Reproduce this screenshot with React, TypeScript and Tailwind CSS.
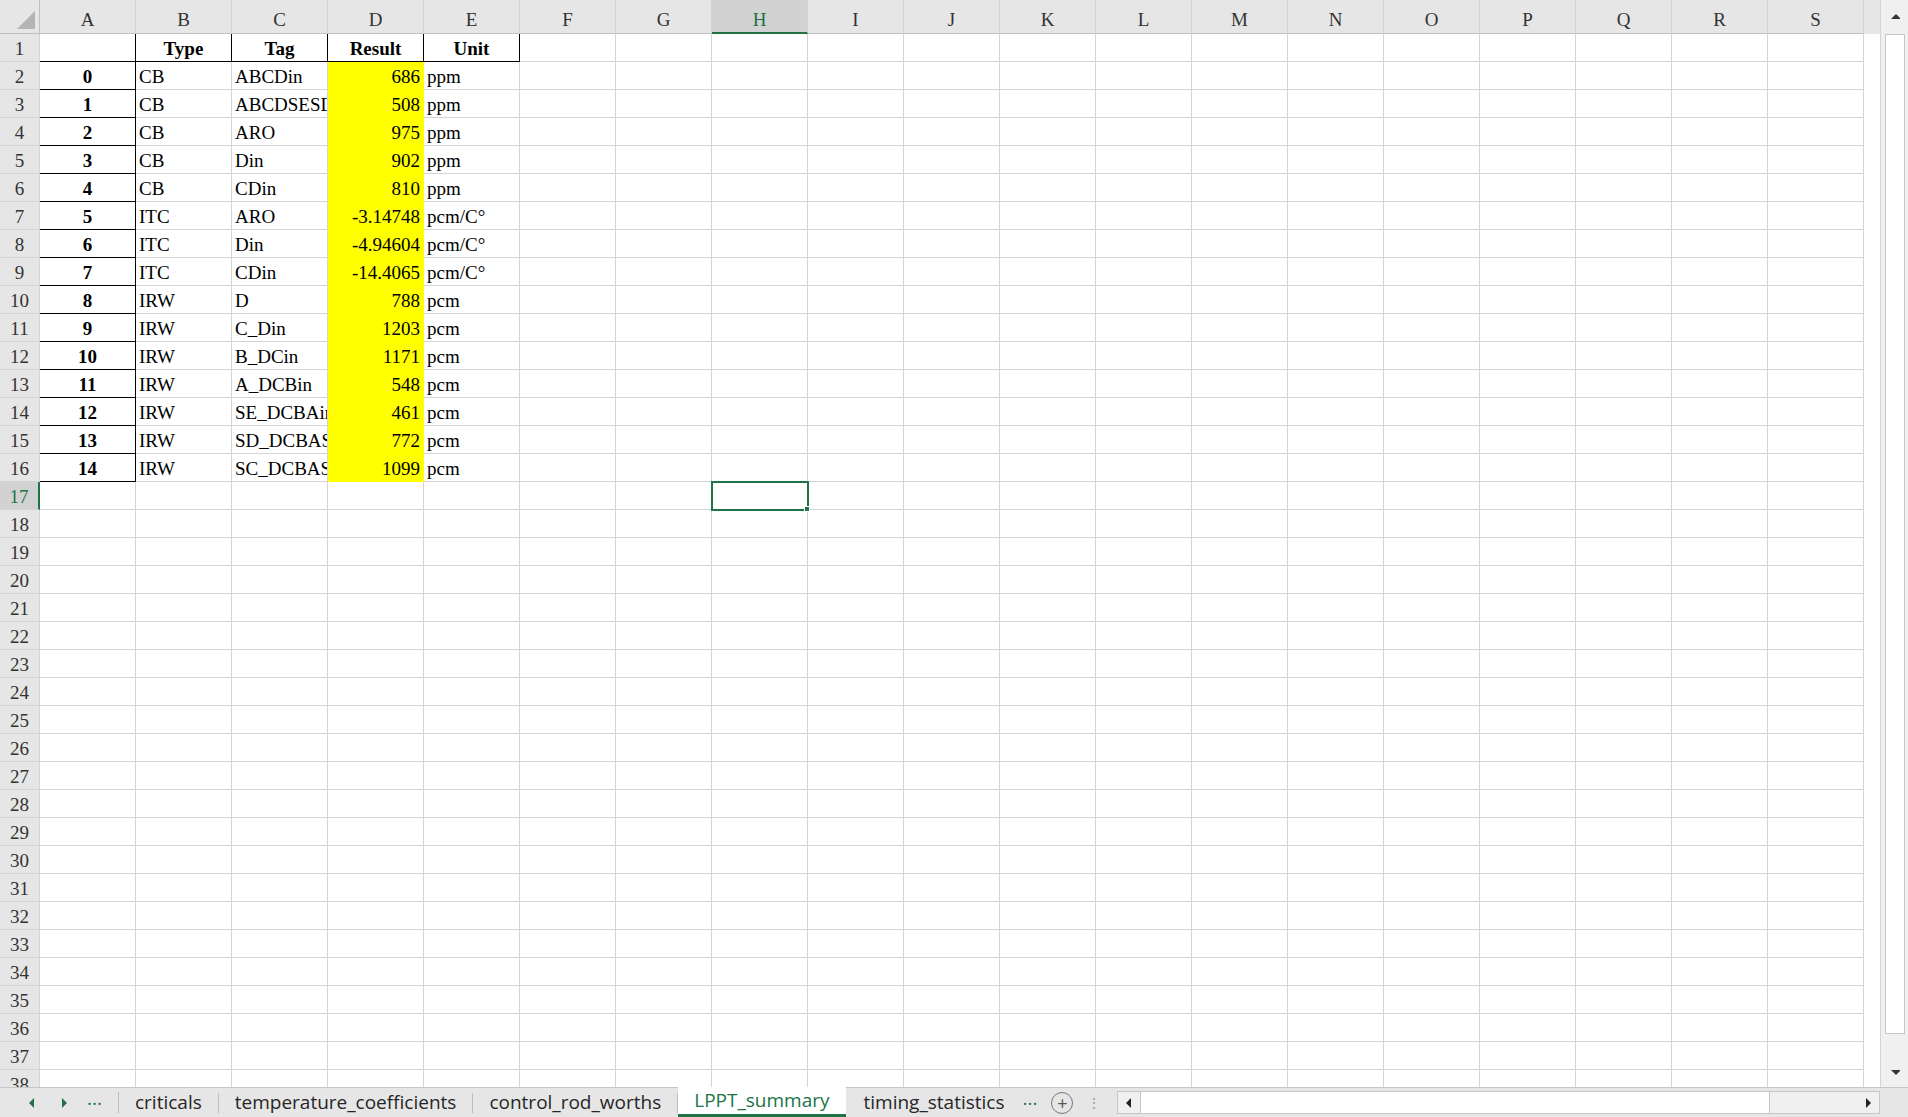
const COLS = "ABCDEFGHIJKLMNOPQRS".split("");

const DATA: [string, string, string, string][] = [
  ["CB", "ABCDin", "686", "ppm"],
  ["CB", "ABCDSESDS", "508", "ppm"],
  ["CB", "ARO", "975", "ppm"],
  ["CB", "Din", "902", "ppm"],
  ["CB", "CDin", "810", "ppm"],
  ["ITC", "ARO", "-3.14748", "pcm/C°"],
  ["ITC", "Din", "-4.94604", "pcm/C°"],
  ["ITC", "CDin", "-14.4065", "pcm/C°"],
  ["IRW", "D", "788", "pcm"],
  ["IRW", "C_Din", "1203", "pcm"],
  ["IRW", "B_DCin", "1171", "pcm"],
  ["IRW", "A_DCBin", "548", "pcm"],
  ["IRW", "SE_DCBAin", "461", "pcm"],
  ["IRW", "SD_DCBASE", "772", "pcm"],
  ["IRW", "SC_DCBASE", "1099", "pcm"],
];

const SERIF = { fontFamily: '"Liberation Serif", "Noto Sans CJK SC", serif' };
const SANS = { fontFamily: '"Open Sans", "Liberation Sans", sans-serif' };

function Tri({ dir, className = "" }: { dir: "l" | "r" | "u" | "d"; className?: string }) {
  const pts = { l: "7,1 7,11 2,6", r: "3,1 3,11 8,6", u: "1,8 11,8 6,3", d: "1,4 11,4 6,9" }[dir];
  return (
    <svg width="10" height="12" viewBox="0 0 10 12" className={className}>
      <polygon points={pts} fill="currentColor" />
    </svg>
  );
}

function Cell({ children, className = "" }: { children?: React.ReactNode; className?: string }) {
  return (
    <div className={`w-[96px] h-[28px] shrink-0 border-r border-b border-[#d4d4d4] overflow-hidden whitespace-nowrap leading-[30px] px-[3px] ${className}`}>
      {children}
    </div>
  );
}

function Row({ n }: { n: number }) {
  const d = n >= 2 && n <= 16 ? DATA[n - 2] : null;
  const active = n === 17;
  return (
    <div className="flex">
      <div className={`w-[40px] h-[28px] shrink-0 border-r border-b border-[#d4d4d4] text-center leading-[30px] ${active ? "bg-[#d2d2d2] text-[#217346] border-r-2 border-r-[#217346]" : "bg-[#e6e6e6] text-[#333]"}`}>
        {n}
      </div>
      {COLS.map((c) => {
        let content: React.ReactNode = null;
        let cls = "";
        if (n === 1) {
          const h: Record<string, string> = { B: "Type", C: "Tag", D: "Result", E: "Unit" };
          if (c in h) {
            content = h[c];
            cls = "font-bold text-center";
          }
          if ("ABCDE".includes(c)) cls += " !border-b-black";
          if ("ABCDE".includes(c)) cls += " !border-r-black";
        } else if (d) {
          if (c === "A") {
            content = String(n - 2);
            cls = "font-bold text-center !border-r-black !border-b-black";
          } else if (c === "B") content = d[0];
          else if (c === "C") content = d[1];
          else if (c === "D") {
            content = d[2];
            cls = "bg-[#ffff00] text-right !border-[#ffff00]";
          } else if (c === "E") content = d[3];
        }
        if (active && c === "H") cls = "outline-2 outline-[#217346] -outline-offset-1 relative !overflow-visible";
        return (
          <Cell key={c} className={cls}>
            {content}
            {active && c === "H" && <span className="absolute right-[-3px] bottom-[-3px] w-[6px] h-[6px] bg-[#217346] border border-white" />}
          </Cell>
        );
      })}
    </div>
  );
}

export default function App() {
  const rows = Array.from({ length: 38 }, (_, i) => i + 1);
  return (
    <div style={SERIF} className="w-[1908px] h-[1117px] bg-white flex flex-col overflow-hidden text-[19px] text-black">
      <div className="flex flex-1 min-h-0">
        <div className="flex-1 min-w-0 overflow-hidden flex flex-col">
          <div className="flex h-[34px] shrink-0 bg-[#e6e6e6]">
            <div className="w-[40px] h-[34px] border-r border-b border-[#bfbfbf] relative">
              <div className="absolute right-[4px] bottom-[4px] w-0 h-0 border-l-[18px] border-l-transparent border-b-[18px] border-b-[#b4b4b4]" />
            </div>
            {COLS.map((c) => (
              <div key={c} className={`w-[96px] shrink-0 text-center leading-[40px] border-r border-[#d4d4d4] ${c === "H" ? "bg-[#d2d2d2] text-[#217346] border-b-2 border-b-[#217346]" : "border-b border-b-[#bfbfbf] text-[#333]"}`}>
                {c}
              </div>
            ))}
          </div>
          <div className="flex-1 overflow-hidden">
            {rows.map((n) => <Row key={n} n={n} />)}
          </div>
        </div>
        <div className="w-[28px] shrink-0 bg-[#f0f0f0] border-l border-[#d4d4d4] flex flex-col items-center text-[#333]">
          <div className="h-[34px] w-full flex items-center justify-center"><Tri dir="u" /></div>
          <div className="w-[20px] h-[1000px] bg-white border border-[#c8c8c8]" />
          <div className="flex-1" />
          <div className="h-[30px] w-full flex items-center justify-center"><Tri dir="d" /></div>
        </div>
      </div>
      <div style={SANS} className="h-[30px] shrink-0 flex items-stretch bg-[#e6e6e6] border-t border-[#c6c6c6] text-[19px] text-[#262626]">
        <div className="w-[118px] flex items-center text-[#217346]">
          <Tri dir="l" className="ml-[27px]" />
          <Tri dir="r" className="ml-[22px]" />
          <span className="ml-[18px] leading-none -mt-[8px]">...</span>
        </div>
        <div className="w-px bg-[#bdbdbd] my-[4px]" />
        {["criticals", "temperature_coefficients", "control_rod_worths"].map((t) => (
          <div key={t} className="flex items-center">
            <span className="px-[16px] leading-none">{t}</span>
            <div className="w-px h-[20px] bg-[#bdbdbd]" />
          </div>
        ))}
        <div className="bg-white border-b-[3px] border-[#217346] -mt-px flex items-center px-[16px] text-[#217346]">LPPT_summary</div>
        <div className="flex items-center px-[18px]">timing_statistics</div>
        <div className="flex items-center gap-[14px] text-[#555]">
          <span className="text-[#217346] -mt-[8px]">...</span>
          <span className="w-[22px] h-[22px] rounded-full border border-[#777] flex items-center justify-center text-[18px] leading-none">+</span>
          <span className="text-[#999] text-[14px]">⋮</span>
        </div>
        <div className="ml-[16px] my-[3px] flex-1 flex border border-[#c6c6c6] bg-[#f0f0f0] mr-[28px] text-[#222]">
          <div className="w-[22px] flex items-center justify-center"><Tri dir="l" /></div>
          <div className="w-[630px] bg-white border-x border-[#c6c6c6]" />
          <div className="flex-1" />
          <div className="w-[22px] flex items-center justify-center"><Tri dir="r" /></div>
        </div>
      </div>
    </div>
  );
}
